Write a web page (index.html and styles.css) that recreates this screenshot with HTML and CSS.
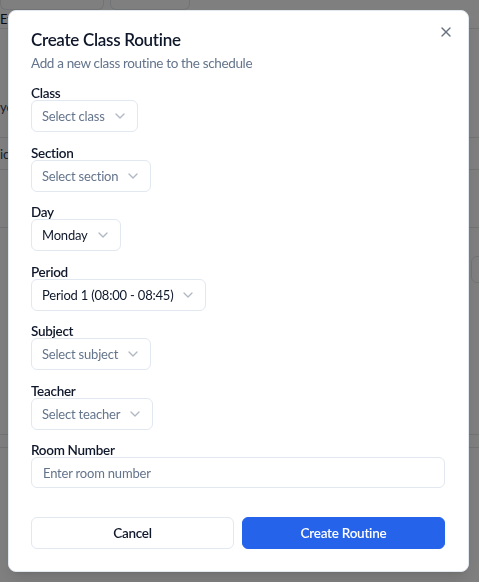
FILE: index.html
```html
<!DOCTYPE html>
<html lang="en">
<head>
<meta charset="utf-8">
<title>Create Class Routine</title>
<link rel="stylesheet" href="styles.css">
</head>
<body>
<div class="page">
  <div class="page-top">
    <div class="tab"></div>
    <div class="tab tab-2"></div>
  </div>
  <div class="page-head"><span>Events</span></div>
  <div class="page-row row-a"><span>yearly</span></div>
  <div class="page-row row-b"><span>icon</span></div>
  <div class="page-row row-c"></div>
  <div class="page-row row-d"><span class="chip"></span></div>
  <div class="page-row row-e"></div>
</div>

<div class="overlay">
  <div class="dialog" role="dialog" aria-labelledby="dlg-title">
    <button class="close" aria-label="Close">
      <svg width="16" height="16" viewBox="0 0 24 24" fill="none" stroke="currentColor" stroke-width="2" stroke-linecap="round" stroke-linejoin="round"><path d="M18 6 6 18"/><path d="m6 6 12 12"/></svg>
    </button>
    <h2 id="dlg-title" class="title">Create Class Routine</h2>
    <p class="desc">Add a new class routine to the schedule</p>

    <div class="fields">
      <div class="field">
        <label class="label">Class</label>
        <button class="select placeholder">Select class<svg class="chev" width="16" height="16" viewBox="0 0 24 24" fill="none" stroke="currentColor" stroke-width="2" stroke-linecap="round" stroke-linejoin="round"><path d="m6 9 6 6 6-6"/></svg></button>
      </div>
      <div class="field">
        <label class="label">Section</label>
        <button class="select placeholder">Select section<svg class="chev" width="16" height="16" viewBox="0 0 24 24" fill="none" stroke="currentColor" stroke-width="2" stroke-linecap="round" stroke-linejoin="round"><path d="m6 9 6 6 6-6"/></svg></button>
      </div>
      <div class="field">
        <label class="label">Day</label>
        <button class="select">Monday<svg class="chev" width="16" height="16" viewBox="0 0 24 24" fill="none" stroke="currentColor" stroke-width="2" stroke-linecap="round" stroke-linejoin="round"><path d="m6 9 6 6 6-6"/></svg></button>
      </div>
      <div class="field">
        <label class="label">Period</label>
        <button class="select">Period 1 (08:00 - 08:45)<svg class="chev" width="16" height="16" viewBox="0 0 24 24" fill="none" stroke="currentColor" stroke-width="2" stroke-linecap="round" stroke-linejoin="round"><path d="m6 9 6 6 6-6"/></svg></button>
      </div>
      <div class="field">
        <label class="label">Subject</label>
        <button class="select placeholder">Select subject<svg class="chev" width="16" height="16" viewBox="0 0 24 24" fill="none" stroke="currentColor" stroke-width="2" stroke-linecap="round" stroke-linejoin="round"><path d="m6 9 6 6 6-6"/></svg></button>
      </div>
      <div class="field">
        <label class="label">Teacher</label>
        <button class="select placeholder">Select teacher<svg class="chev" width="16" height="16" viewBox="0 0 24 24" fill="none" stroke="currentColor" stroke-width="2" stroke-linecap="round" stroke-linejoin="round"><path d="m6 9 6 6 6-6"/></svg></button>
      </div>
      <div class="field">
        <label class="label" for="room">Room Number</label>
        <input id="room" class="input" type="text" placeholder="Enter room number">
      </div>
    </div>

    <div class="actions">
      <button class="btn btn-outline">Cancel</button>
      <button class="btn btn-primary">Create Routine</button>
    </div>
  </div>
</div>
</body>
</html>
```

FILE: styles.css
```css
* { box-sizing: border-box; }

html, body {
  margin: 0;
  padding: 0;
  height: 100%;
}

body {
  font-family: Lato, "Liberation Sans", sans-serif;
  color: #0f172a;
  background: #ffffff;
  overflow: hidden;
}

/* faint page behind the overlay */
.page {
  height: 100%;
  display: flex;
  flex-direction: column;
}
.page-top {
  height: 10px;
  display: flex;
  gap: 6px;
}
.tab {
  width: 104px;
  border: 1px solid #e5e7eb;
  border-top: none;
  border-radius: 0 0 6px 6px;
}
.tab-2 { width: 80px; }
.page-head {
  height: 19px;
  border-bottom: 1px solid #e5e7eb;
  font-size: 13px;
  line-height: 18px;
  color: #111827;
}
.page-row {
  border-bottom: 1px solid #e5e7eb;
  font-size: 13px;
  color: #334155;
}
.row-a { height: 109px; padding-top: 70px; }
.row-b { height: 32px; padding-top: 8px; }
.row-c { height: 58px; }
.row-d { height: 207px; position: relative; }
.chip {
  position: absolute;
  right: -20px;
  top: 28px;
  width: 28px;
  height: 27px;
  border: 1px solid #e5e7eb;
  border-radius: 6px;
}
.row-e { height: 13px; }

/* overlay + dialog */
.overlay {
  position: fixed;
  inset: 0;
  background: rgba(0, 0, 0, 0.5);
  padding: 10px 0 0 8px;
}

.dialog {
  position: relative;
  width: 461px;
  height: 562px;
  background: #ffffff;
  border: 1px solid #e2e8f0;
  border-radius: 8px;
  box-shadow: 0 10px 15px -3px rgba(0,0,0,0.1), 0 4px 6px -4px rgba(0,0,0,0.1);
  padding: 18px 23px 22px 22px;
  display: flex;
  flex-direction: column;
}

.close {
  position: absolute;
  top: 11px;
  right: 12px;
  width: 20px;
  height: 20px;
  padding: 0;
  border: none;
  background: none;
  color: #334155;
  opacity: 0.75;
  display: flex;
  align-items: center;
  justify-content: center;
}

.title {
  margin: 0;
  font-size: 17px;
  line-height: 22px;
  font-weight: 600;
  letter-spacing: -0.3px;
}

.desc {
  margin: 2px 0 0;
  font-size: 13.5px;
  line-height: 20px;
  color: #64748b;
  letter-spacing: -0.35px;
}

.fields {
  margin-top: 12px;
  display: flex;
  flex-direction: column;
  gap: 12.5px;
}

.field {
  display: flex;
  flex-direction: column;
  align-items: flex-start;
}

.label {
  font-size: 13.5px;
  line-height: 15px;
  font-weight: 600;
  letter-spacing: -0.3px;
  color: #0f172a;
  padding-top: 1px;
  margin-bottom: -1px;
}

.select {
  height: 32px;
  display: inline-flex;
  align-items: center;
  gap: 7px;
  padding: 0 9px 0 10px;
  border: 1px solid #e2e8f0;
  border-radius: 6px;
  background: #ffffff;
  font-family: inherit;
  font-size: 13px;
  letter-spacing: -0.2px;
  color: #0f172a;
}
.select.placeholder { color: #64748b; }

.chev {
  color: #64748b;
  opacity: 0.5;
  flex: none;
}

.input {
  width: 100%;
  height: 31px;
  padding: 0 11px;
  border: 1px solid #e2e8f0;
  border-radius: 6px;
  font-family: inherit;
  font-size: 13px;
  letter-spacing: -0.2px;
  color: #0f172a;
  outline: none;
}
.input::placeholder { color: #64748b; }

.actions {
  margin-top: auto;
  display: grid;
  grid-template-columns: 1fr 1fr;
  gap: 8px;
}

.btn {
  height: 32px;
  border-radius: 6px;
  font-family: inherit;
  font-size: 13.5px;
  font-weight: 600;
  letter-spacing: -0.25px;
}
.btn-outline {
  background: #ffffff;
  border: 1px solid #e2e8f0;
  color: #0f172a;
}
.btn-primary {
  background: #2563eb;
  border: 1px solid #2563eb;
  color: #ffffff;
}
```
